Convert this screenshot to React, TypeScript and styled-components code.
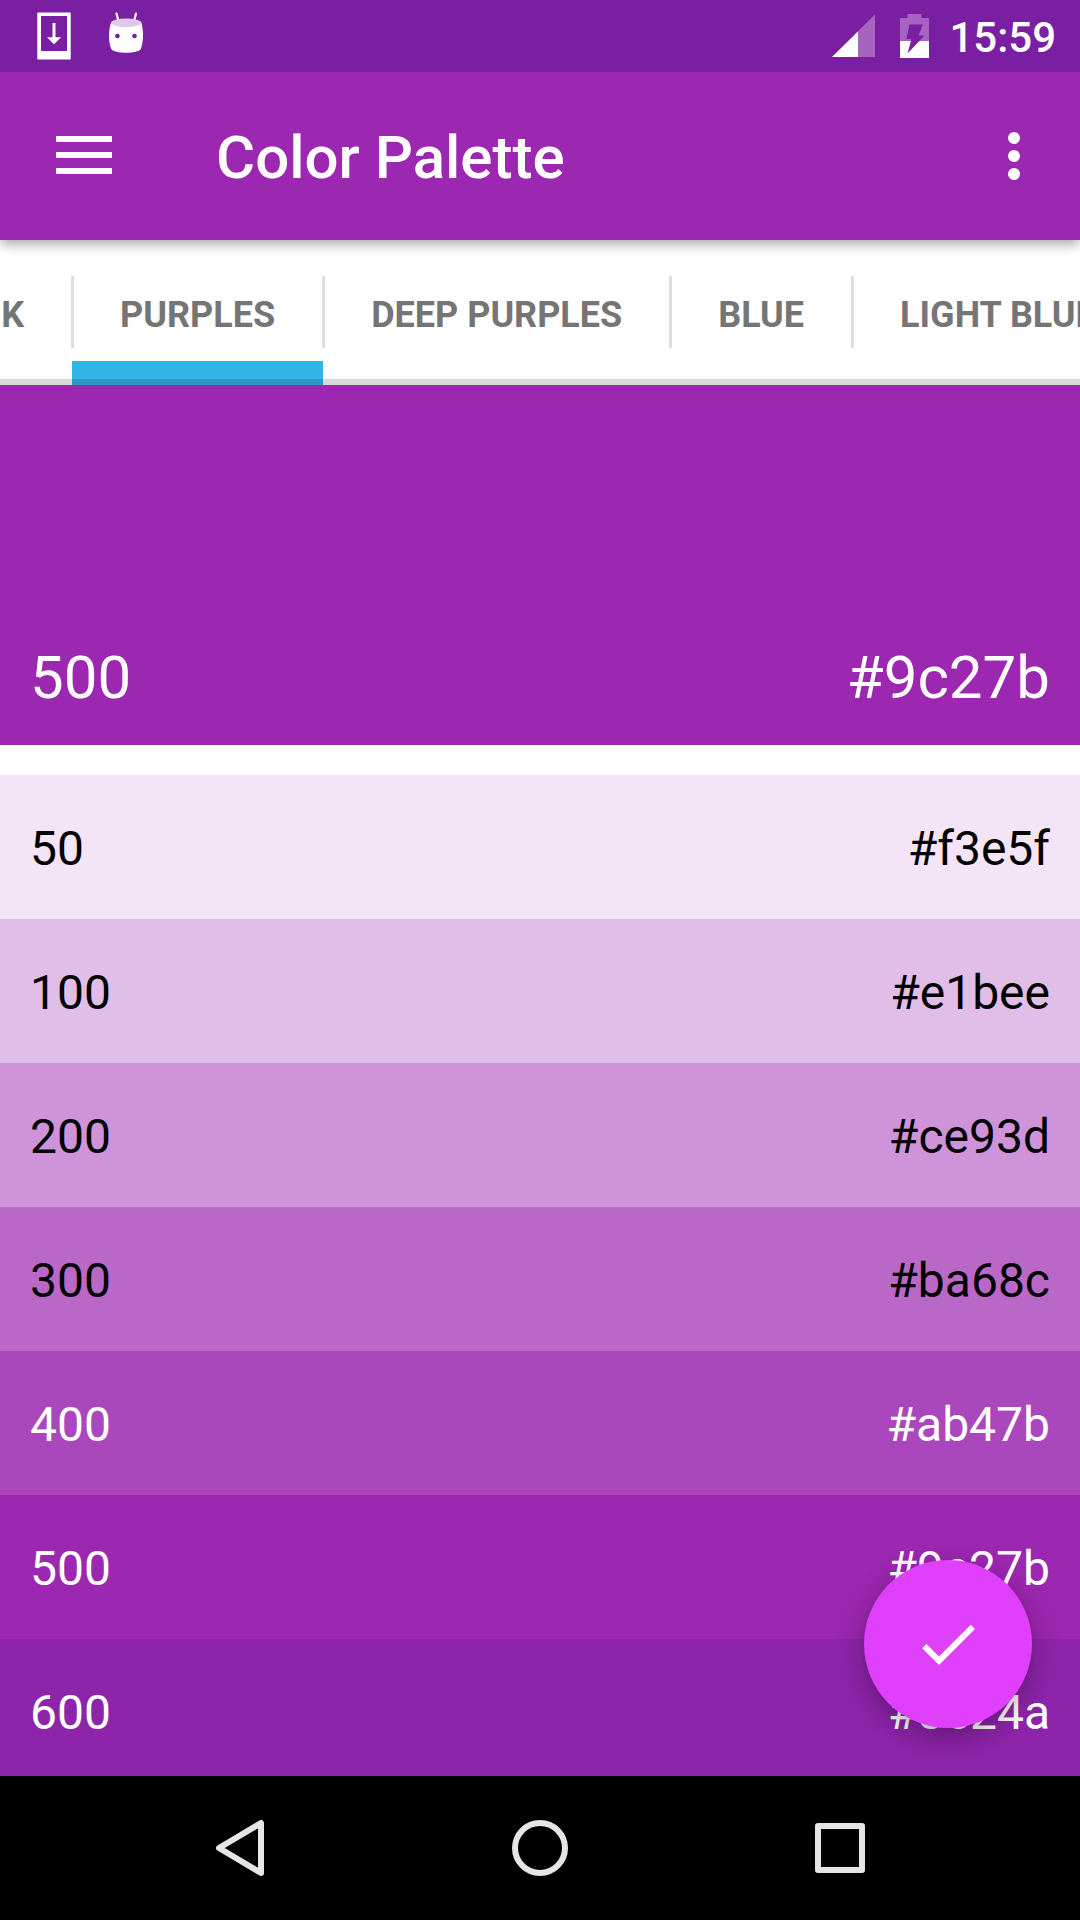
import React, { useState } from "react";
import styled, { createGlobalStyle } from "styled-components";

const GlobalStyle = createGlobalStyle`
  *, *::before, *::after { box-sizing: border-box; }
  html, body { margin: 0; padding: 0; }
  body { background: #ffffff; font-family: Roboto, "Liberation Sans", sans-serif; }
  button { font: inherit; border: 0; padding: 0; background: none; color: inherit; cursor: pointer; }
`;

const Screen = styled.div`
  display: flex;
  flex-direction: column;
  height: 100vh;
  overflow: hidden;
`;

const StatusBar = styled.div`
  position: relative;
  z-index: 3;
  display: flex;
  flex: none;
  align-items: center;
  height: 72px;
  padding: 0 24px 0 18px;
  background: #7b1fa2;
  color: #ffffff;
`;

const StatusIcons = styled.div`
  display: flex;
  flex: 1;
  align-items: center;
`;

const SystemIcons = styled.div`
  display: flex;
  align-items: center;
  gap: 24px;
`;

const Clock = styled.time`
  margin-left: 20px;
  padding-top: 4px;
  font-size: 42px;
  font-weight: 500;
  line-height: 50px;
`;

const Toolbar = styled.header`
  position: relative;
  z-index: 2;
  display: flex;
  flex: none;
  align-items: center;
  height: 168px;
  background: #9c27b0;
  color: #ffffff;
  box-shadow: 0 4px 12px rgba(0, 0, 0, 0.36);
`;

const IconButton = styled.button<{ $width: number }>`
  display: flex;
  flex: none;
  align-items: center;
  justify-content: center;
  width: ${(p) => p.$width}px;
  height: 168px;
`;

const Title = styled.h1`
  flex: 1;
  margin: 0;
  padding: 4px 0 0 48px;
  font-size: 60px;
  font-weight: 500;
  line-height: 72px;
`;

const TabStrip = styled.div`
  display: flex;
  flex: none;
  justify-content: flex-start;
  height: 145px;
  overflow: hidden;
  background: linear-gradient(#d9d9d9, #d9d9d9) bottom / 100% 6px no-repeat #ffffff;
`;

const TabTrack = styled.div`
  display: flex;
  flex: none;
  margin-left: -106px;
`;

const Tab = styled.button<{ $active: boolean }>`
  position: relative;
  flex: none;
  padding: 4px 48px 0;
  font-size: 36px;
  font-weight: 700;
  line-height: 42px;
  white-space: nowrap;
  color: #757575;
  background: ${(p) =>
    p.$active
      ? "linear-gradient(#2b99c3, #2b99c3) bottom / 100% 6px no-repeat, linear-gradient(#33b5e5, #33b5e5) bottom / 100% 24px no-repeat"
      : "none"};

  &::after {
    content: "";
    position: absolute;
    z-index: 1;
    top: 36px;
    right: -2px;
    width: 3px;
    height: 72px;
    background: #dedede;
  }
`;

const Palette = styled.main`
  position: relative;
  flex: 1;
  min-height: 0;
  overflow: hidden;
`;

const Swatch = styled.div<{ $color: string; $dark: boolean }>`
  display: flex;
  align-items: center;
  justify-content: space-between;
  height: 144px;
  padding: 4px 30px 0;
  background: ${(p) => p.$color};
  color: ${(p) => (p.$dark ? "#ffffff" : "#000000")};
  font-size: 48px;
  line-height: 56px;
`;

const HeroSwatch = styled(Swatch)`
  align-items: flex-end;
  height: 360px;
  margin-bottom: 30px;
  padding-bottom: 31px;
  font-size: 60px;
  line-height: 72px;
`;

const Fab = styled.button`
  position: absolute;
  right: 48px;
  bottom: 48px;
  display: flex;
  align-items: center;
  justify-content: center;
  width: 168px;
  height: 168px;
  border-radius: 50%;
  background: #e040fb;
  box-shadow: 0 10px 30px rgba(0, 0, 0, 0.28), 0 2px 6px rgba(0, 0, 0, 0.06);
`;

const NavBar = styled.nav`
  display: flex;
  flex: none;
  justify-content: center;
  height: 144px;
  padding: 0 90px;
  background: #000000;
`;

const NavButton = styled.button`
  display: flex;
  flex: 1;
  align-items: center;
  justify-content: center;
`;

const InstallIcon = () => (
  <svg width="72" height="72" viewBox="18 0 72 72" fill="#fff" aria-hidden="true">
    <path fillRule="evenodd" d="M38 12.500h32a.7.7 0 0 1 .7.7v45.600a.7.7 0 0 1-.7.7h-32a.7.7 0 0 1-.7-.7v-45.600a.7.7 0 0 1 .7-.7zM41 16v35h26v-35z" />
    <path d="M52.500 23h3v14.300h5.500l-7 7-7-7h5.500z" />
  </svg>
);

const DroidIcon = () => (
  <svg width="72" height="72" viewBox="90 0 72 72" aria-hidden="true">
    <path d="M116.500 13.500l2 8M136 13.500l-2 8" stroke="#fff" strokeWidth="2.200" strokeLinecap="round" />
    <path fill="#fff" fillRule="evenodd" d="M111 22.500c4 4.800 26 4.800 30.400 0 1.300 5 1.700 9 1.600 13.500-.1 5-.8 9.500-2.200 13-3 5-26.500 5-29.500 0-1.500-3.500-2.200-8-2.300-13 0-4.500.6-8.500 2-13.500zM117.400 33.700a2.300 2.300 0 1 0 .01 0zM134.500 33.700a2.300 2.300 0 1 0 .01 0z" />
    <ellipse cx="126.200" cy="22.700" rx="15.200" ry="4.200" fill="#dec7e8" />
  </svg>
);

const SignalIcon = () => (
  <svg width="44" height="44" viewBox="0 0 44 44" aria-hidden="true">
    <path d="M43 .5V43H0z" fill="#a663c0" />
    <path d="M26 17.500V43H0z" fill="#fff" />
  </svg>
);

const BatteryIcon = () => (
  <svg width="29" height="44" viewBox="0 0 29 44" aria-hidden="true">
    <path d="M7.500 0h14v4h7.500v23H0V4h7.500z" fill="#a663c0" />
    <path d="M0 27h29v17H0z" fill="#fff" />
    <path d="M9.500 10.500h13.500l-4.500 11h6L7.500 39.500l4-14.500H6.500z" fill="#7b1fa2" />
  </svg>
);

const MenuIcon = () => (
  <svg width="72" height="72" viewBox="0 0 72 72" fill="#fff" aria-hidden="true">
    <path d="M8 16h56v6H8zM8 32h56v6H8zM8 48h56v6H8z" />
  </svg>
);

const MoreIcon = () => (
  <svg width="72" height="72" viewBox="0 0 72 72" fill="#fff" aria-hidden="true">
    <circle cx="36" cy="18" r="6" />
    <circle cx="36" cy="36" r="6" />
    <circle cx="36" cy="54" r="6" />
  </svg>
);

const CheckIcon = () => (
  <svg width="72" height="72" viewBox="0 0 24 24" fill="#fff" aria-hidden="true">
    <path d="M9 16.170L4.830 12l-1.420 1.410L9 19 21 7l-1.410-1.410z" />
  </svg>
);

const navIconProps = {
  width: 72,
  height: 72,
  viewBox: "0 0 72 72",
  fill: "none",
  stroke: "#e6e6e6",
  strokeWidth: 6,
  strokeLinejoin: "round" as const,
  "aria-hidden": true,
};

const tabs = ["PINK", "PURPLES", "DEEP PURPLES", "BLUE", "LIGHT BLUE"];

const shades = [
  { name: "50", color: "#f3e5f5", label: "#f3e5f", dark: false },
  { name: "100", color: "#e1bee7", label: "#e1bee", dark: false },
  { name: "200", color: "#ce93d8", label: "#ce93d", dark: false },
  { name: "300", color: "#ba68c8", label: "#ba68c", dark: false },
  { name: "400", color: "#ab47bc", label: "#ab47b", dark: true },
  { name: "500", color: "#9c27b0", label: "#9c27b", dark: true },
  { name: "600", color: "#8e24aa", label: "#8e24a", dark: true },
];

export default function App() {
  const [active, setActive] = useState("PURPLES");

  return (
    <>
      <GlobalStyle />
      <Screen>
        <StatusBar>
          <StatusIcons>
            <InstallIcon />
            <DroidIcon />
          </StatusIcons>
          <SystemIcons>
            <SignalIcon />
            <BatteryIcon />
          </SystemIcons>
          <Clock>15:59</Clock>
        </StatusBar>

        <Toolbar>
          <IconButton $width={168} aria-label="Open navigation">
            <MenuIcon />
          </IconButton>
          <Title>Color Palette</Title>
          <IconButton $width={132} aria-label="More options">
            <MoreIcon />
          </IconButton>
        </Toolbar>

        <TabStrip>
          <TabTrack role="tablist">
            {tabs.map((name) => (
              <Tab
                key={name}
                role="tab"
                aria-selected={name === active}
                $active={name === active}
                onClick={() => setActive(name)}
              >
                {name}
              </Tab>
            ))}
          </TabTrack>
        </TabStrip>

        <Palette>
          <HeroSwatch $color="#9c27b0" $dark>
            <span>500</span>
            <span>#9c27b</span>
          </HeroSwatch>
          {shades.map((shade) => (
            <Swatch key={shade.name} $color={shade.color} $dark={shade.dark}>
              <span>{shade.name}</span>
              <span>{shade.label}</span>
            </Swatch>
          ))}
          <Fab aria-label="Confirm">
            <CheckIcon />
          </Fab>
        </Palette>

        <NavBar aria-label="System">
          <NavButton aria-label="Back">
            <svg {...navIconProps}>
              <path d="M57 11v50L15 36z" />
            </svg>
          </NavButton>
          <NavButton aria-label="Home">
            <svg {...navIconProps}>
              <circle cx="36" cy="36" r="25" />
            </svg>
          </NavButton>
          <NavButton aria-label="Recent apps">
            <svg {...navIconProps}>
              <path d="M14 14h44v44H14z" />
            </svg>
          </NavButton>
        </NavBar>
      </Screen>
    </>
  );
}
